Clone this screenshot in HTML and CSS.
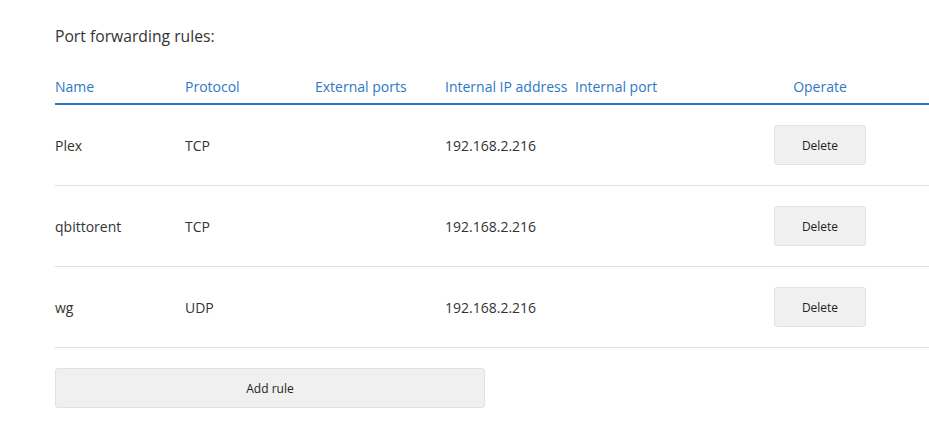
FILE: index.html
```html
<!DOCTYPE html>
<html>
<head>
<meta charset="utf-8">
<link rel="stylesheet" href="styles.css">
</head>
<body>
<div class="page">
  <div class="title">Port forwarding rules:</div>
  <div class="table">
    <div class="row head">
      <div class="cell">Name</div>
      <div class="cell">Protocol</div>
      <div class="cell">External ports</div>
      <div class="cell">Internal IP address</div>
      <div class="cell">Internal port</div>
      <div class="cell op">Operate</div>
    </div>
    <div class="row">
      <div class="cell">Plex</div>
      <div class="cell">TCP</div>
      <div class="cell"></div>
      <div class="cell">192.168.2.216</div>
      <div class="cell"></div>
      <div class="cell op"><button class="btn del">Delete</button></div>
    </div>
    <div class="row">
      <div class="cell">qbittorent</div>
      <div class="cell">TCP</div>
      <div class="cell"></div>
      <div class="cell">192.168.2.216</div>
      <div class="cell"></div>
      <div class="cell op"><button class="btn del">Delete</button></div>
    </div>
    <div class="row">
      <div class="cell">wg</div>
      <div class="cell">UDP</div>
      <div class="cell"></div>
      <div class="cell">192.168.2.216</div>
      <div class="cell"></div>
      <div class="cell op"><button class="btn del">Delete</button></div>
    </div>
  </div>
  <button class="btn add">Add rule</button>
</div>
</body>
</html>
```
FILE: styles.css
```css
html, body {
  margin: 0;
  padding: 0;
  background: #fff;
  overflow: hidden;
}
body {
  font-family: "Open Sans", "Noto Sans", sans-serif;
  color: #333;
  font-size: 14px;
}
.page {
  padding: 25px 0 0 55px;
  width: 880px;
}
.title {
  font-size: 15.7px;
  line-height: 22px;
  color: #333;
}
.table {
  margin-top: 22px;
}
.row {
  display: grid;
  grid-template-columns: 130px 130px 130px 130px 130px 230px;
  align-items: center;
  height: 80px;
  border-bottom: 1px solid #ddd;
}
.row.head {
  height: 34px;
  box-sizing: border-box;
  border-bottom: 2px solid #2e77c6;
  color: #2e77c6;
  align-items: end;
  padding-bottom: 7px;
  height: 36px;
}
.cell {
  white-space: nowrap;
  font-size: 14px;
}
.op {
  text-align: center;
}
.btn {
  font-family: "Open Sans", "Noto Sans", sans-serif;
  font-size: 12px;
  color: #222;
  background: #f0f0f0;
  border: 1px solid #e2e2e2;
  border-radius: 3px;
  cursor: pointer;
}
.del {
  width: 92px;
  height: 40px;
}
.add {
  display: block;
  width: 430px;
  height: 40px;
  margin-top: 20px;
}
```
